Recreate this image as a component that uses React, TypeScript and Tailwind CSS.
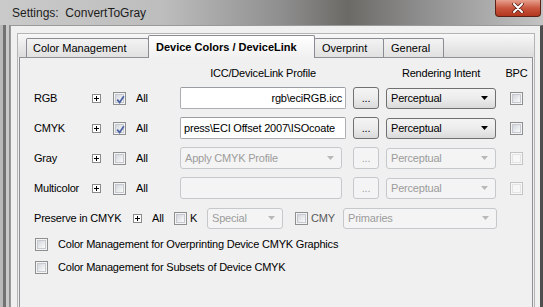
import clsx from "clsx";

const ui = "font-['Liberation_Sans','DejaVu_Sans',sans-serif]";

function PlusBox() {
  return (
    <span className="flex h-[9px] w-[9px] shrink-0 items-center justify-center border border-[#8a8a8a] bg-white">
      <svg width="7" height="7" viewBox="0 0 7 7">
        <rect x="1" y="3" width="5" height="1" fill="#000" />
        <rect x="3" y="1" width="1" height="5" fill="#000" />
      </svg>
    </span>
  );
}

function CheckBox({ checked = false, disabled = false }: { checked?: boolean; disabled?: boolean }) {
  return (
    <span
      className={clsx(
        "relative flex h-[13px] w-[13px] shrink-0 border p-[1px]",
        disabled ? "border-[#c4c4c4] bg-[#f7f7f7]" : "border-[#8e8f8f] bg-[#f4f4f4]"
      )}
    >
      <span
        className={clsx(
          "flex-1 border",
          disabled
            ? "border-[#e4e4e4] bg-[#f7f7f7]"
            : "border-[#c6cad0] bg-linear-to-br from-[#d3d7dc] to-[#fbfbfb]"
        )}
      />
      {checked && (
        <svg className="absolute left-[1px] top-[1px]" width="11" height="11" viewBox="0 0 11 11">
          <path d="M2.2 5.6 L4.6 8.4 L8.8 2.2" fill="none" stroke="#4c64a3" strokeWidth="1.8" />
        </svg>
      )}
    </span>
  );
}

function Combo({
  label = "",
  disabled = false,
  arrow = true,
  className,
}: {
  label?: string;
  disabled?: boolean;
  arrow?: boolean;
  className?: string;
}) {
  return (
    <div
      className={clsx(
        "flex h-[21px] shrink-0 items-center justify-between rounded-[3px] border pl-[4px] pr-[7px]",
        disabled
          ? "border-[#c5c9cc] bg-[#f4f4f4] text-[#9c9c9c]"
          : "border-[#707070] bg-linear-to-b from-[#f4f4f4] via-[#ececec] to-[#dadada] text-black",
        className
      )}
    >
      <span className="whitespace-nowrap">{label}</span>
      {arrow && (
        <svg width="7" height="4" viewBox="0 0 7 4">
          <path d="M0 0H7L3.5 4Z" fill={disabled ? "#b8b8b8" : "#000"} />
        </svg>
      )}
    </div>
  );
}

function Browse({ disabled = false }: { disabled?: boolean }) {
  return (
    <div
      className={clsx(
        "ml-[7px] flex h-[22px] w-[26px] shrink-0 items-end justify-center rounded-[3px] border pb-[4px] leading-none",
        disabled
          ? "border-[#c5c9cc] bg-[#f4f4f4] text-[#a3a3a3]"
          : "border-[#707070] bg-linear-to-b from-[#f4f4f4] via-[#ececec] to-[#dadada] text-black"
      )}
    >
      ...
    </div>
  );
}

type Row = {
  label: string;
  checked: boolean;
  enabled: boolean;
  profile: string;
  right?: boolean;
};

const rows: Row[] = [
  { label: "RGB", checked: true, enabled: true, profile: "rgb\\eciRGB.icc", right: true },
  { label: "CMYK", checked: true, enabled: true, profile: "press\\ECI Offset 2007\\ISOcoate" },
  { label: "Gray", checked: false, enabled: false, profile: "Apply CMYK Profile" },
  { label: "Multicolor", checked: false, enabled: false, profile: "" },
];

const tabs = ["Color Management", "Device Colors / DeviceLink", "Overprint", "General"];

export default function App() {
  return (
    <div
      className={clsx(
        "flex h-[307px] w-[543px] flex-col overflow-hidden bg-[linear-gradient(to_right,#cacaca_0%,#bdbdbd_30%,#8e8e8e_52%,#6c6a66_64%,#8f8f8f_78%,#c3c3c3_100%)] text-[11px] text-black",
        ui
      )}
    >
      <div className="flex h-[25px] shrink-0 items-start justify-between">
        <span className="pl-[12px] pt-[6px] text-[12px] leading-[14px] text-[#1c1c1c]">
          Settings:&nbsp; ConvertToGray
        </span>
        <div className="mr-[2px] flex h-[17px] w-[46px] items-center justify-center rounded-b-[4px] border border-t-0 border-[#5a2217] bg-linear-to-b from-[#e6a08f] via-[#c9563f] to-[#b3361d]">
          <svg width="12" height="10" viewBox="0 0 12 10">
            <path d="M2 1 L10 9 M10 1 L2 9" stroke="#5a2217" strokeWidth="3.6" strokeLinecap="round" />
            <path d="M2 1 L10 9 M10 1 L2 9" stroke="#fff" strokeWidth="2" strokeLinecap="round" />
          </svg>
        </div>
      </div>

      <div className="flex min-h-0 flex-1">
        <div className="flex w-[10px] shrink-0">
          <span className="w-[3px] bg-[#b9b9b9]" />
          <span className="w-[3px] bg-[#727272]" />
          <span className="w-[3px] bg-[#c9c9c9]" />
          <span className="w-[1px] bg-[#8a8a8a]" />
        </div>

        <div className="flex min-w-0 flex-1 flex-col border-l border-r-[3px] border-t border-l-[#9a9a9a] border-r-[#4e4e4e] border-t-[#9a9a9a] bg-[#f0f0f0] pl-[6px] pr-[5px] pt-[7px]">
          <div className="flex min-h-0 flex-1 flex-col border border-b-0 border-[#b4b4b4]">
            <div className="flex h-[23px] shrink-0 items-end bg-linear-to-b from-[#f8f8f8] to-[#dcdcdc] pl-[8px]">
              {tabs.map((t, i) =>
                i === 1 ? (
                  <div
                    key={t}
                    className="relative z-10 -mb-[1px] -ml-[1px] h-[23px] w-[167px] rounded-t-[2px] border border-b-0 border-[#898c95] bg-linear-to-b from-[#ffffff] to-[#f0f0f0] pl-[7px] pt-[5px] font-bold leading-[13px]"
                  >
                    {t}
                  </div>
                ) : (
                  <div
                    key={t}
                    className={clsx(
                      "h-[19px] rounded-t-[2px] border border-b-0 border-[#898c95] bg-linear-to-b from-[#f3f3f3] to-[#e1e1e1] pl-[6px] pt-[3px] leading-[13px]",
                      i === 0 && "w-[123px]",
                      i === 2 && "-ml-[1px] w-[70px] pl-[7px]",
                      i === 3 && "-ml-[1px] w-[61px] pl-[7px]"
                    )}
                  >
                    {t}
                  </div>
                )
              )}
            </div>

            <div className="mx-[1px] flex min-h-0 flex-1 flex-col border-x border-t border-[#8e9196] bg-[#f0f0f0] pl-[14px] pt-[6px] tracking-[-0.2px]">
              <div className="flex h-[19px] shrink-0 items-center">
                <span className="w-[146px] shrink-0" />
                <span className="w-[166px] shrink-0 text-center">ICC/DeviceLink Profile</span>
                <span className="w-[40px] shrink-0" />
                <span className="w-[110px] shrink-0 text-center">Rendering Intent</span>
                <span className="ml-[8px] w-[25px] shrink-0 text-center">BPC</span>
              </div>

              {rows.map((r) => (
                <div key={r.label} className="flex h-[30px] shrink-0 items-center">
                  <span className="w-[58px] shrink-0">{r.label}</span>
                  <PlusBox />
                  <span className="ml-[12px] flex">
                    <CheckBox checked={r.checked} />
                  </span>
                  <span className="ml-[10px] w-[44px] shrink-0">All</span>
                  <div className="w-[166px] shrink-0">
                    {r.enabled ? (
                      <div
                        className={clsx(
                          "h-[22px] w-[166px] overflow-hidden whitespace-nowrap rounded-[2px] border border-[#abadb3] border-t-[#9a9ca4] bg-white px-[3px] leading-[20px]",
                          r.right && "text-right"
                        )}
                      >
                        {r.profile}
                      </div>
                    ) : (
                      <Combo
                        label={r.profile}
                        disabled
                        arrow={r.profile !== ""}
                        className="h-[22px] w-[162px]"
                      />
                    )}
                  </div>
                  <Browse disabled={!r.enabled} />
                  <Combo label="Perceptual" disabled={!r.enabled} className="ml-[7px] w-[110px]" />
                  <span className="ml-[14px] flex">
                    <CheckBox disabled={!r.enabled} />
                  </span>
                </div>
              ))}

              <div className="flex h-[30px] shrink-0 items-center">
                <span className="w-[99px] shrink-0">Preserve in CMYK</span>
                <PlusBox />
                <span className="ml-[10px] w-[22px] shrink-0">All</span>
                <CheckBox />
                <span className="ml-[3px] w-[17px] shrink-0">K</span>
                <Combo label="Special" disabled className="w-[76px]" />
                <span className="ml-[12px] flex">
                  <CheckBox />
                </span>
                <span className="ml-[3px] w-[32px] shrink-0 text-[#5a5a5a]">CMY</span>
                <Combo label="Primaries" disabled className="w-[154px]" />
              </div>

              <div className="flex h-[22px] shrink-0 items-center pl-[1px]">
                <CheckBox />
                <span className="ml-[10px]">Color Management for Overprinting Device CMYK Graphics</span>
              </div>
              <div className="flex h-[24px] shrink-0 items-center pl-[1px]">
                <CheckBox />
                <span className="ml-[10px]">Color Management for Subsets of Device CMYK</span>
              </div>
            </div>
          </div>
        </div>
      </div>
    </div>
  );
}
